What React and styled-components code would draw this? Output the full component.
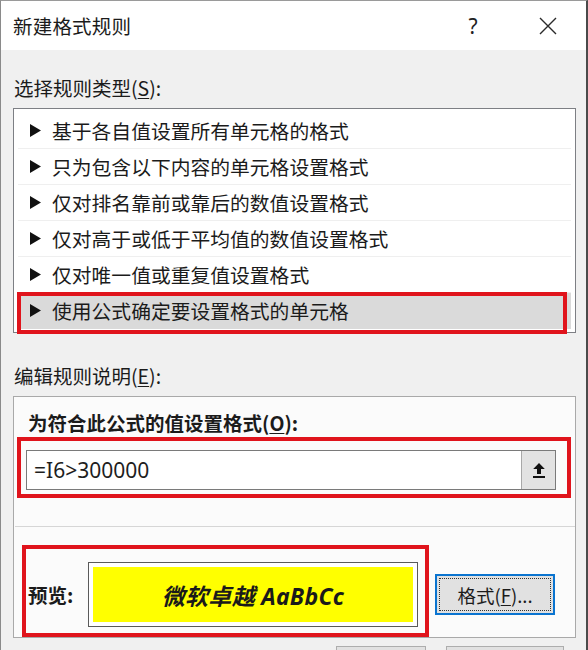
import styled, { createGlobalStyle } from 'styled-components';

const GlobalStyle = createGlobalStyle`
  * {
    box-sizing: border-box;
  }

  body {
    margin: 0;
    background: #f0f0f0;
    font-family: "Noto Sans", "Noto Sans CJK SC", sans-serif;
    color: #1b1b1b;
  }
`;

const Dialog = styled.div`
  width: 588px;
  height: 650px;
  overflow: hidden;
  background: #f0f0f0;
  border-top: 1px solid #9a9a9a;
  border-left: 1px solid #8a8a8a;
  border-right: 2px solid #4a4a4a;
  display: flex;
  flex-direction: column;
`;

const TitleBar = styled.header`
  height: 49px;
  flex: none;
  background: #ffffff;
  display: flex;
  align-items: center;
  padding-left: 12px;
`;

const Title = styled.h1`
  flex: 1;
  margin: 0;
  font-size: 19.5px;
  font-weight: normal;
  font-family: "Noto Sans CJK SC", sans-serif;
  letter-spacing: 0.2px;
`;

const TitleButton = styled.button`
  width: 46px;
  height: 49px;
  margin-right: ${(props) => props.$gap}px;
  border: none;
  background: none;
  padding: 0;
  display: flex;
  align-items: center;
  justify-content: center;
  font-family: "Noto Sans", sans-serif;
  font-size: 21px;
  color: #222222;
`;

const Body = styled.main`
  padding: 0 10px 0 12px;
  display: flex;
  flex-direction: column;
`;

const SectionLabel = styled.p`
  margin: ${(props) => props.$top}px 0 8px 1px;
  font-size: 19.5px;
  line-height: 24px;
  font-family: "Noto Sans CJK SC", sans-serif;

  u {
    text-underline-offset: 2px;
  }
`;

const RuleList = styled.ul`
  margin: 0;
  padding: 4px 4px 3px;
  list-style: none;
  background: #ffffff;
  border: 1px solid #7d7f84;
`;

const RuleRow = styled.li`
  position: relative;
  height: 36px;
  display: flex;
  align-items: center;
  gap: 11px;
  padding-left: 12px;
  font-size: 19.8px;
  font-family: "Noto Sans CJK SC", sans-serif;
  background: ${(props) => (props.$selected ? '#dadada' : 'transparent')};
  border-bottom: 1px solid ${(props) => (props.$selected ? 'transparent' : '#efefef')};
`;

const Mark = styled.span`
  position: absolute;
  top: ${(props) => props.$t}px;
  right: ${(props) => props.$r}px;
  bottom: ${(props) => props.$b}px;
  left: ${(props) => props.$l}px;
  border: 4px solid #e0141c;
  pointer-events: none;
`;

const GroupBox = styled.section`
  height: 242px;
  background: #fbfbfb;
  border: 1px solid #a9a9a9;
  padding: 14px 0 0 0;
  display: flex;
  flex-direction: column;
`;

const FieldLabel = styled.p`
  margin: 0 0 15px 14px;
  font-size: 19.5px;
  line-height: 24px;
  font-weight: bold;
  font-family: "Noto Sans CJK SC", sans-serif;

  u {
    text-underline-offset: 2px;
  }
`;

const FormulaWrap = styled.div`
  position: relative;
  margin-left: 12px;
  width: 530px;
`;

const FormulaInput = styled.div`
  height: 40px;
  display: flex;
  background: #ffffff;
  border: 1px solid #7a7a7a;
`;

const FormulaText = styled.span`
  flex: 1;
  display: flex;
  align-items: center;
  padding-left: 7px;
  font-family: "Noto Sans", sans-serif;
  font-size: 21px;
  color: #1e1e1e;
`;

const CollapseButton = styled.button`
  width: 34px;
  border: none;
  border-left: 1px solid #a8a8a8;
  background: #e2e2e2;
  padding: 0;
  display: flex;
  align-items: center;
  justify-content: center;
`;

const Divider = styled.hr`
  margin: 36px 0 0 1px;
  border: none;
  border-top: 1px solid #d6d6d6;
`;

const PreviewRow = styled.div`
  margin-top: 35px;
  display: flex;
  align-items: center;
  gap: 17px;
`;

const PreviewArea = styled.div`
  position: relative;
  margin-left: 14px;
  display: flex;
  align-items: center;
`;

const PreviewLabel = styled.span`
  width: 60px;
  font-size: 19.5px;
  font-weight: bold;
  font-family: "Noto Sans CJK SC", sans-serif;
`;

const Sample = styled.div`
  width: 330px;
  height: 65px;
  padding: 4px;
  background: #ffffff;
  border: 1px solid #5a5a5a;
`;

const SampleFill = styled.div`
  height: 100%;
  background: #ffff00;
  display: flex;
  align-items: center;
  justify-content: center;
  font-family: "Noto Sans", "Noto Sans CJK SC", sans-serif;
  font-size: 23px;
  font-weight: bold;
  font-style: italic;
  color: #1a1a1a;
  letter-spacing: 0.3px;
`;

const FormatButton = styled.button`
  width: 120px;
  height: 41px;
  background: #e1e1e1;
  border: 2px solid #0a74d0;
  outline: 1px dotted #333333;
  outline-offset: -5px;
  font-family: "Noto Sans CJK SC", sans-serif;
  font-size: 18.5px;
  color: #1b1b1b;
  padding: 0;

  u {
    text-underline-offset: 2px;
  }
`;

const Footer = styled.footer`
  margin-top: 8px;
  padding-right: 12px;
  display: flex;
  justify-content: flex-end;
  gap: 20px;
`;

const DialogButton = styled.button`
  width: ${(props) => props.$width}px;
  height: 32px;
  background: #e1e1e1;
  border: 1px solid #adadad;
`;

const rules = [
  '基于各自值设置所有单元格的格式',
  '只为包含以下内容的单元格设置格式',
  '仅对排名靠前或靠后的数值设置格式',
  '仅对高于或低于平均值的数值设置格式',
  '仅对唯一值或重复值设置格式',
  '使用公式确定要设置格式的单元格',
];

function Arrow() {
  return (
    <svg width="11" height="13" viewBox="0 0 11 13">
      <polygon points="0,0 11,6.5 0,13" fill="#111111" />
    </svg>
  );
}

function CloseIcon() {
  return (
    <svg width="18" height="18" viewBox="0 0 18 18">
      <path d="M1 1 L17 17 M17 1 L1 17" stroke="#2a2a2a" strokeWidth="1.4" />
    </svg>
  );
}

function CollapseIcon() {
  return (
    <svg width="14" height="17" viewBox="0 0 14 17">
      <path d="M7 1 L12.8 7 L9 7 L9 12 L5 12 L5 7 L1.2 7 Z" fill="#111111" />
      <rect x="1" y="14" width="12" height="2" fill="#111111" />
    </svg>
  );
}

export default function App() {
  const selected = rules.length - 1;

  return (
    <>
      <GlobalStyle />
      <Dialog>
        <TitleBar>
          <Title>新建格式规则</Title>
          <TitleButton type="button" $gap={29}>?</TitleButton>
          <TitleButton type="button" $gap={15} aria-label="关闭">
            <CloseIcon />
          </TitleButton>
        </TitleBar>

        <Body>
          <SectionLabel $top={26}>
            选择规则类型(
            <u>S</u>
            ):
          </SectionLabel>
          <RuleList>
            {rules.map((rule, index) => (
              <RuleRow key={rule} $selected={index === selected}>
                <Arrow />
                {rule}
                {index === selected ? <Mark $t={-1} $r={4} $b={-6} $l={-1} /> : null}
              </RuleRow>
            ))}
          </RuleList>

          <SectionLabel $top={31}>
            编辑规则说明(
            <u>E</u>
            ):
          </SectionLabel>
          <GroupBox>
            <FieldLabel>
              为符合此公式的值设置格式(
              <u>O</u>
              ):
            </FieldLabel>
            <FormulaWrap>
              <FormulaInput>
                <FormulaText>=I6&gt;300000</FormulaText>
                <CollapseButton type="button">
                  <CollapseIcon />
                </CollapseButton>
              </FormulaInput>
              <Mark $t={-13} $r={-15} $b={-8} $l={-9} />
            </FormulaWrap>
            <Divider />
            <PreviewRow>
              <PreviewArea>
                <PreviewLabel>预览:</PreviewLabel>
                <Sample>
                  <SampleFill>微软卓越 AaBbCc</SampleFill>
                </Sample>
                <Mark $t={-17} $r={-11} $b={-10} $l={-6} />
              </PreviewArea>
              <FormatButton type="button">
                格式(
                <u>F</u>
                )...
              </FormatButton>
            </PreviewRow>
          </GroupBox>

          <Footer>
            <DialogButton type="button" $width={90} aria-label="确定" />
            <DialogButton type="button" $width={118} aria-label="取消" />
          </Footer>
        </Body>
      </Dialog>
    </>
  );
}
